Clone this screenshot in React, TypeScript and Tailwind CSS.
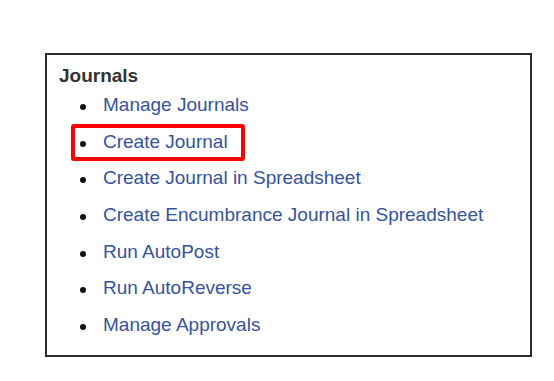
import React from "react";

const items = [
  "Manage Journals",
  "Create Journal",
  "Create Journal in Spreadsheet",
  "Create Encumbrance Journal in Spreadsheet",
  "Run AutoPost",
  "Run AutoReverse",
  "Manage Approvals",
];

export default function App() {
  return (
    <div
      className="w-[554px] h-[381px] bg-white pt-[53px] pl-[45px]"
      style={{ fontFamily: '"Liberation Sans", Arial, sans-serif' }}
    >
      <div className="w-[487px] h-[304px] border-2 border-[#2b2b2b] pt-[10px] pl-[12px]">
        <div className="text-[19px] leading-[22px] font-bold text-[#333333]">Journals</div>
        <ul>
          {items.map((t, i) => (
            <li key={t} className="relative flex items-center h-[36.7px] text-[19px] leading-[36.7px]">
              <span className="ml-[21px] mt-[3px] w-[6px] h-[6px] rounded-full bg-[#111]" />
              <span className="ml-[17px] text-[#3553a0]">{t}</span>
              {i === 1 && (
                <span className="absolute left-[12px] top-0 w-[174px] h-[37px] border-4 border-[#ff0000] rounded-[3px]" />
              )}
            </li>
          ))}
        </ul>
      </div>
    </div>
  );
}
